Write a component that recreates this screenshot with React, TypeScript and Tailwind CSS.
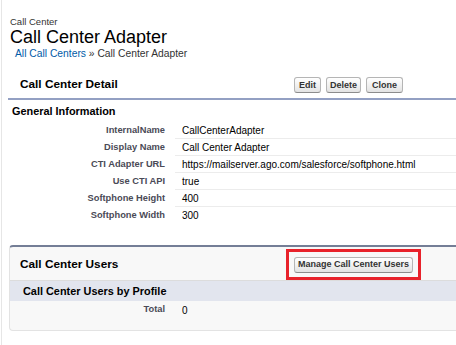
const FIELDS: { label: string; value: string }[] = [
  { label: "InternalName", value: "CallCenterAdapter" },
  { label: "Display Name", value: "Call Center Adapter" },
  { label: "CTI Adapter URL", value: "https://mailserver.ago.com/salesforce/softphone.html" },
  { label: "Use CTI API", value: "true" },
  { label: "Softphone Height", value: "400" },
  { label: "Softphone Width", value: "300" },
];

const BTN =
  "flex h-[16px] items-center rounded-[3px] border border-[#b5b5b5] border-b-[#8c8c8c] bg-gradient-to-b from-white to-[#e3e3e3] text-[9px] font-bold leading-none text-[#333]";

function App() {
  return (
    <div className="h-[345px] w-[456px] overflow-hidden bg-white pl-[1px] font-['Liberation_Sans',Arial,sans-serif]">
      <div className="h-full border-l border-[#e6e6e6]">
        {/* page header */}
        <div className="pl-[8px] pt-[16px]">
          <div className="text-[9.5px] leading-[11px] text-[#333]">Call Center</div>
          <div className="text-[18px] leading-[20px] text-black">Call Center Adapter</div>
          <div className="mt-[1px] pl-[5px] text-[10.3px] leading-[12px] text-[#333]">
            <span className="text-[#015ba7]">All Call Centers</span> » Call Center Adapter
          </div>
        </div>

        {/* detail block */}
        <div className="ml-[6px] mt-[12px]">
          <div className="flex h-[28px] items-center border-b-2 border-[#93a0c3] pl-[12px]">
            <div className="w-[274px] shrink-0 text-[11.8px] font-bold text-black">Call Center Detail</div>
            <div className="flex gap-[5px]">
              <button type="button" className={`${BTN} px-[4px]`}>Edit</button>
              <button type="button" className={`${BTN} px-[3px]`}>Delete</button>
              <button type="button" className={`${BTN} px-[5px]`}>Clone</button>
            </div>
          </div>
          <div className="flex h-[22px] items-center pl-[4px] text-[10.9px] font-bold text-black">
            General Information
          </div>
          <div>
            {FIELDS.map((f, i) => (
              <div key={f.label} className="flex h-[17px]">
                <div className="flex w-[167px] shrink-0 items-center justify-end pr-[10px] text-[9.3px] font-bold text-[#4a4a56]">
                  {f.label}
                </div>
                <div
                  className={`flex flex-1 items-center pl-[7px] text-[10px] text-black ${
                    i < FIELDS.length - 1 ? "border-b border-[#ececec]" : ""
                  }`}
                >
                  {f.value}
                </div>
              </div>
            ))}
          </div>
        </div>

        {/* related list */}
        <div className="ml-[7px] mt-[21px] rounded-l-[4px] border-b border-l border-t-2 border-[#e3e3e3] border-t-[#747e96] bg-[#f8f8f8]">
          <div className="flex h-[33px] items-start pl-[10px] pt-[2px]">
            <div className="flex h-[31px] w-[266px] shrink-0 items-center text-[11.8px] font-bold text-black">
              Call Center Users
            </div>
            <div className="flex h-[31px] items-center border-[3px] border-[#e8222b] px-[5px]">
              <button type="button" className={`${BTN} px-[3px]`}>Manage Call Center Users</button>
            </div>
          </div>
          <div className="flex h-[21px] items-center border-t border-[#dcdcdc] bg-[#e2e5ee] pl-[13px] text-[10.9px] font-bold text-black">
            Call Center Users by Profile
          </div>
          <div className="flex h-[18px] pb-0">
            <div className="flex w-[165px] shrink-0 items-center justify-end pr-[10px] text-[9.3px] font-bold text-[#4a4a56]">
              Total
            </div>
            <div className="flex items-center pl-[7px] text-[10px] text-black">0</div>
          </div>
          <div className="h-[11px]" />
        </div>
      </div>
    </div>
  );
}

export default App;
